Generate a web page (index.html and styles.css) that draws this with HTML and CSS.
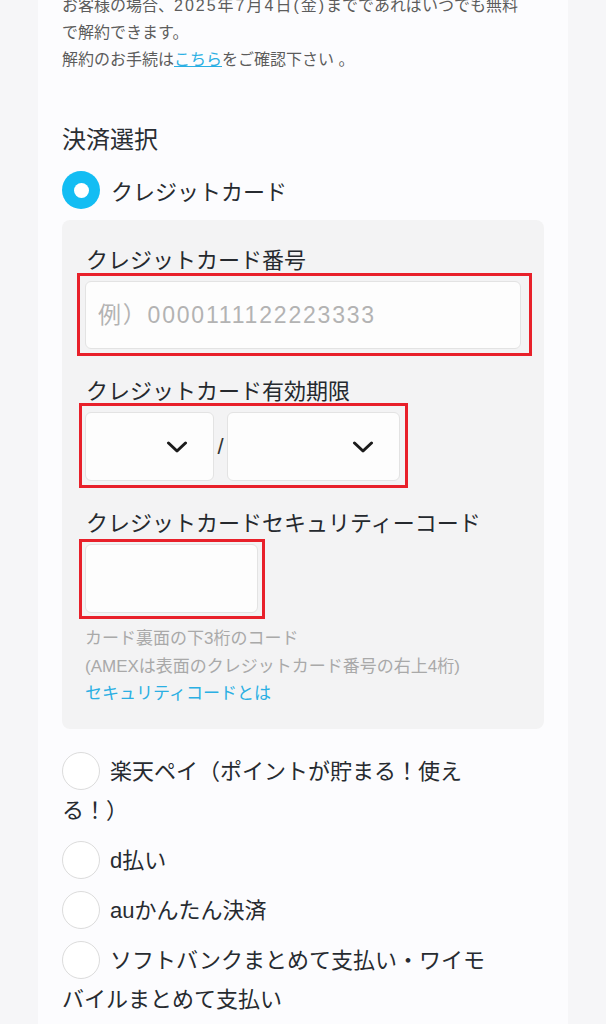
FILE: index.html
```html
<!DOCTYPE html>
<html lang="ja">
<head>
<meta charset="utf-8">
<title>決済選択</title>
<link rel="stylesheet" href="styles.css">
</head>
<body>
<div class="card">
  <p class="intro">お客様の場合、<span class="date">2025年7月4日(金)</span>までであればいつでも無料<br>で解約できます。<br>解約のお手続は<a class="link" href="#">こちら</a>をご確認下さい 。</p>

  <h2 class="heading">決済選択</h2>

  <div class="radio-row">
    <span class="radio-on"></span>
    <span>クレジットカード</span>
  </div>

  <div class="panel">
    <div class="field">
      <label class="field-label">クレジットカード番号</label>
      <div class="marked m1">
        <input class="input" type="text" placeholder="例）0000111122223333">
      </div>
    </div>

    <div class="field">
      <label class="field-label">クレジットカード有効期限</label>
      <div class="marked m2 expiry">
        <div class="select sel-m">
          <svg class="chev" viewBox="0 0 22 12"><path d="M2.5 2 L11 10 L19.5 2" fill="none" stroke="#1b1b1b" stroke-width="3" stroke-linecap="round" stroke-linejoin="round"/></svg>
        </div>
        <span class="slash">/</span>
        <div class="select sel-y">
          <svg class="chev" viewBox="0 0 22 12"><path d="M2.5 2 L11 10 L19.5 2" fill="none" stroke="#1b1b1b" stroke-width="3" stroke-linecap="round" stroke-linejoin="round"/></svg>
        </div>
      </div>
    </div>

    <div class="field last">
      <label class="field-label">クレジットカードセキュリティーコード</label>
      <div class="marked m3 cvc-wrap">
        <input class="input cvc" type="text">
      </div>
      <div class="help">
        <div>カード裏面の下3桁のコード</div>
        <div>(AMEXは表面のクレジットカード番号の右上4桁)</div>
        <a href="#">セキュリティコードとは</a>
      </div>
    </div>
  </div>

  <div class="options">
    <div class="opt"><span class="circle"></span>楽天ペイ（ポイントが貯まる！使える！）</div>
    <div class="opt"><span class="circle"></span>d払い</div>
    <div class="opt"><span class="circle"></span>auかんたん決済</div>
    <div class="opt"><span class="circle"></span>ソフトバンクまとめて支払い・ワイモバイルまとめて支払い</div>
  </div>
</div>
</body>
</html>
```

FILE: styles.css
```css
* { box-sizing: border-box; }
html, body { margin: 0; }
body {
  background: #f6f6f8;
  font-family: "Liberation Sans", "Noto Sans CJK JP", sans-serif;
  color: #272b30;
  width: 606px;
  height: 1024px;
  overflow: hidden;
}
.card {
  margin: 0 38px;
  padding: 0 24px;
  background: #fcfcfe;
  min-height: 1060px;
}
.intro {
  margin: -8px 0 0;
  font-size: 16px;
  line-height: 27px;
  color: #5c5c5c;
}
.date { letter-spacing: 2px; }
.link { color: #2aafe3; text-decoration: underline; }
.heading {
  margin: 50px 0 0;
  font-size: 24px;
  line-height: 34px;
  font-weight: normal;
  color: #2a2e33;
}
.radio-row {
  display: flex;
  align-items: center;
  gap: 11px;
  margin-top: 14px;
  height: 38px;
  font-size: 22px;
}
.radio-on {
  width: 38px;
  height: 38px;
  border-radius: 50%;
  background: #13bdf3;
  display: flex;
  align-items: center;
  justify-content: center;
  flex: none;
}
.radio-on::after {
  content: "";
  width: 15px;
  height: 15px;
  border-radius: 50%;
  background: #fff;
}
.panel {
  margin-top: 11px;
  background: #f3f3f4;
  border-radius: 8px;
  padding: 26px 23px 21px;
}
.field { margin-bottom: 28px; }
.field.last { margin-bottom: 0; }
.field-label {
  display: block;
  font-size: 22px;
  line-height: 30px;
  margin: 0 0 5px 1px;
  color: #25292e;
}
.marked { position: relative; }
.marked::after {
  content: "";
  position: absolute;
  border: 3px solid #e8202a;
  pointer-events: none;
}
.m1::after { left: -8px; top: -8px; right: -11px; bottom: -7px; }
.m2::after { left: -6px; top: -9px; right: -8px; bottom: -7px; }
.m3::after { left: -6px; top: -5px; right: -7px; bottom: -6px; }
.input {
  display: block;
  width: 100%;
  height: 68px;
  border: 1px solid #e3e3e3;
  border-radius: 6px;
  background: #fdfdfd;
  font-family: inherit;
  font-size: 23px;
  letter-spacing: 1.8px;
  padding: 0 12px;
  color: #333;
  outline: none;
}
.input::placeholder { color: #b3b3b3; }
.expiry {
  display: inline-flex;
  align-items: center;
}
.select {
  height: 69px;
  border: 1px solid #e3e3e3;
  border-radius: 6px;
  background: #fdfdfd;
  display: flex;
  align-items: center;
  justify-content: flex-end;
  padding-right: 25px;
}
.sel-m { width: 129px; }
.sel-y { width: 173px; }
.chev { width: 22px; height: 12px; display: block; }
.slash {
  width: 13px;
  text-align: center;
  font-size: 22px;
  color: #333;
}
.cvc-wrap { display: inline-block; }
.cvc { width: 173px; height: 69px; }
.help {
  margin-top: 12px;
  font-size: 17px;
  line-height: 27.5px;
  color: #a9a9a9;
}
.help a { color: #2aafe3; text-decoration: none; }
.options {
  margin-top: 23px;
  max-width: 434px;
}
.opt {
  font-size: 22px;
  line-height: 39px;
  margin-bottom: 11px;
  color: #272b30;
}
.circle {
  display: inline-block;
  width: 38px;
  height: 38px;
  border: 1.5px solid #dcdcdc;
  border-radius: 50%;
  background: #fff;
  vertical-align: -9px;
  margin: -2px 10px -2px 0;
}
```
